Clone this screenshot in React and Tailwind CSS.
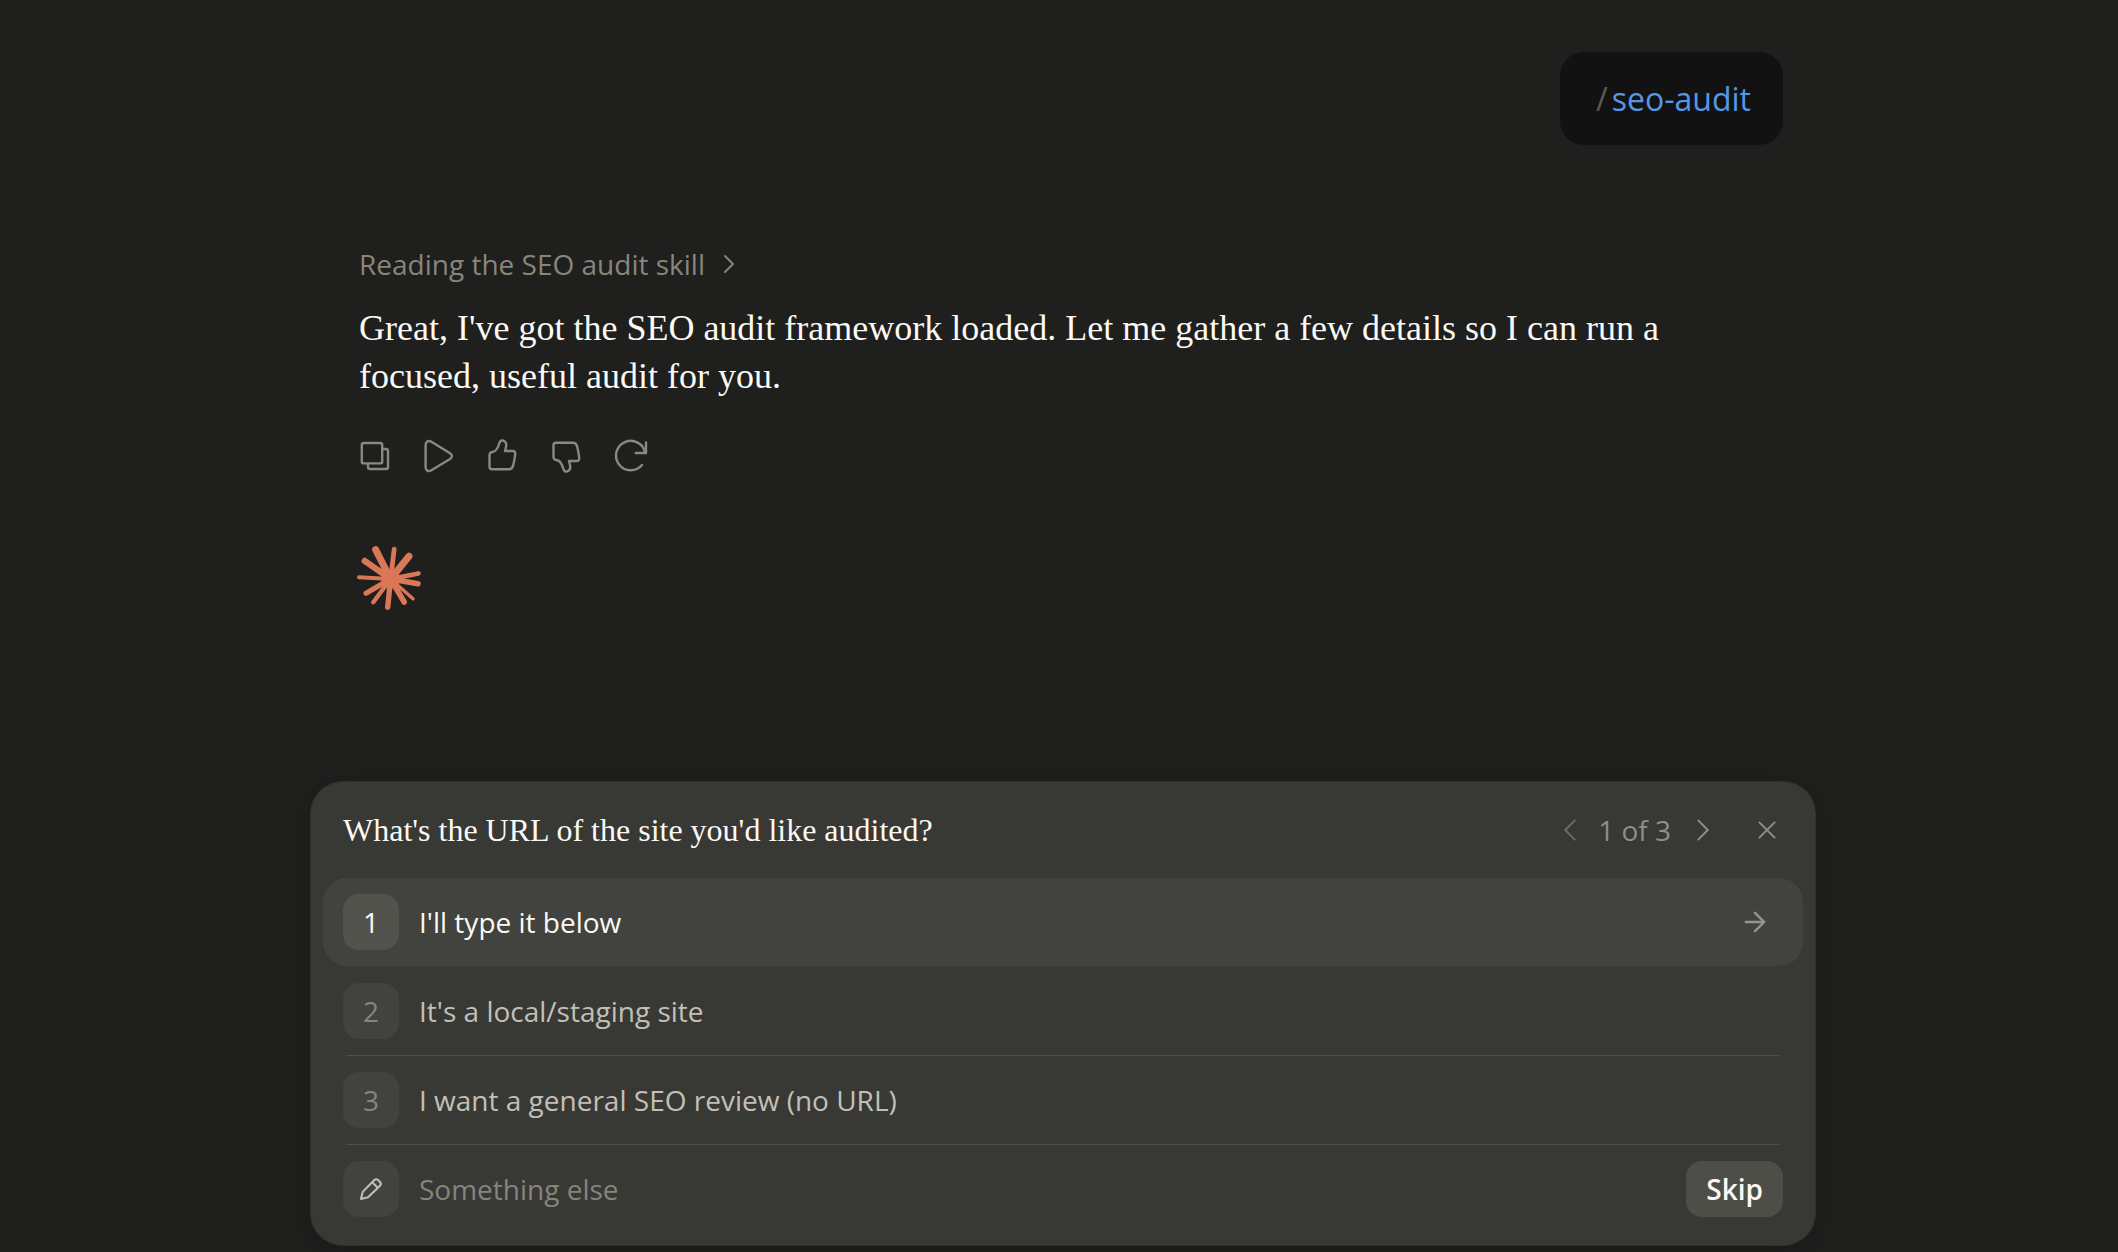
import React, { useState } from "react";

const options = [
  "I'll type it below",
  "It's a local/staging site",
  "I want a general SEO review (no URL)",
];

// tip x, tip y, thickness of each ray
const rays = [
  [18.6, 3.6, 7],
  [37.2, 3.2, 4.8],
  [52, 10.2, 7],
  [61.4, 27.4, 4.6],
  [61, 37.8, 5.6],
  [56, 52.8, 3.4],
  [47.2, 56, 5.6],
  [30.7, 61.2, 5.4],
  [16.3, 56.2, 4.4],
  [9, 47.2, 5.2],
  [2, 31.3, 4],
  [7.8, 15, 6.4],
];

function Icon({ children, className = "size-10", strokeWidth = 2.4 }) {
  return (
    <svg
      viewBox="0 0 40 40"
      fill="none"
      stroke="currentColor"
      strokeWidth={strokeWidth}
      strokeLinecap="round"
      strokeLinejoin="round"
      className={className}
      aria-hidden="true"
    >
      {children}
    </svg>
  );
}

const thumbPath =
  "M6.5 19a3 3 0 0 1 3-3C13 15.6 15.4 10.6 16.4 7C17.3 3.8 20 4.2 21.5 5.2C23.6 6.6 23.6 8.5 23 11L22 15H29.5C31.5 15 32.5 16.2 32.2 18.2C31.8 22 31.2 26 30 30C29.2 32.4 28.2 33.2 26 33.2H9C7.5 33.2 6.5 32.2 6.5 30.7Z";

function ActionButton({ label, children }) {
  return (
    <button
      type="button"
      aria-label={label}
      className="size-16 flex items-center justify-center rounded-2xl cursor-pointer"
    >
      {children}
    </button>
  );
}

function MessageActions() {
  return (
    <div className="flex -ml-4 mt-6 text-[#8a8981]">
      <ActionButton label="Copy">
        <Icon>
          <rect x="6.8" y="7" width="20.4" height="20.4" rx="2" />
          <path d="M28 13h3a2 2 0 0 1 2 2v16a2 2 0 0 1-2 2H15a2 2 0 0 1-2-2v-3" />
        </Icon>
      </ActionButton>
      <ActionButton label="Read aloud">
        <Icon>
          <path d="M6.6 9.2C6.6 5.4 9.4 4 12.4 5.8L31 17.2C33.6 18.8 33.6 21.4 31 23L12.4 34.3C9.4 36.1 6.6 34.6 6.6 30.9Z" />
        </Icon>
      </ActionButton>
      <ActionButton label="Good response">
        <Icon>
          <path d={thumbPath} />
        </Icon>
      </ActionButton>
      <ActionButton label="Bad response">
        <Icon className="size-10 -scale-y-100">
          <path d={thumbPath} />
        </Icon>
      </ActionButton>
      <ActionButton label="Retry">
        <Icon>
          <path d="M35 6.5V17H24.8" />
          <path d="M34.2 17A14.7 14.7 0 1 0 31 29" />
        </Icon>
      </ActionButton>
    </div>
  );
}

function Starburst() {
  return (
    <svg
      viewBox="0 0 64 64"
      className="size-16 -ml-0.5 mt-[58px]"
      aria-hidden="true"
    >
      <circle cx="33.6" cy="33" r="9.5" fill="#d97757" />
      {rays.map(([x, y, w]) => (
        <line
          key={`${x}-${y}`}
          x1="33.6"
          y1="33"
          x2={x}
          y2={y}
          stroke="#d97757"
          strokeWidth={w}
          strokeLinecap="round"
        />
      ))}
    </svg>
  );
}

function QuestionCard() {
  const [selected, setSelected] = useState(0);
  const [other, setOther] = useState("");

  return (
    <section className="bg-[#383835] rounded-[32px] px-3 pb-3 ring-1 ring-[#30302e] shadow-[0_6px_32px_rgba(0,0,0,0.22)]">
      {/* Header */}
      <div className="h-24 px-5 flex items-center justify-between">
        <h2 className="font-['Liberation_Serif',serif] text-[32px] leading-10 text-[#faf9f5]">
          What's the URL of the site you'd like audited?
        </h2>

        <div className="flex items-center text-[#8f8e87]">
          <button
            type="button"
            aria-label="Previous question"
            disabled
            className="size-8 flex items-center justify-center text-[#6b6a65]"
          >
            <Icon className="size-8">
              <path d="M26 8L14 20L26 32" />
            </Icon>
          </button>
          <span className="ml-3 mr-4 text-[28px] leading-10">1 of 3</span>
          <button
            type="button"
            aria-label="Next question"
            className="size-8 flex items-center justify-center cursor-pointer"
          >
            <Icon className="size-8">
              <path d="M14 8L26 20L14 32" />
            </Icon>
          </button>
          <button
            type="button"
            aria-label="Close"
            className="size-8 ml-8 flex items-center justify-center cursor-pointer"
          >
            <Icon className="size-8">
              <path d="M10.5 10.5L29.5 29.5M29.5 10.5L10.5 29.5" />
            </Icon>
          </button>
        </div>
      </div>

      {/* Options */}
      {options.map((text, i) => {
        const active = i === selected;

        return (
          <div key={text}>
            <button
              type="button"
              onClick={() => setSelected(i)}
              className={
                active
                  ? "w-full px-5 py-4 flex items-center gap-5 rounded-3xl text-left cursor-pointer bg-[#42423e] text-[#faf9f5]"
                  : "w-full px-5 py-4 flex items-center gap-5 rounded-3xl text-left cursor-pointer text-[#c2c0b6]"
              }
            >
              <span
                className={
                  active
                    ? "size-14 flex items-center justify-center rounded-2xl text-[28px] leading-10 bg-[#53534e]"
                    : "size-14 flex items-center justify-center rounded-2xl text-[28px] leading-10 bg-[#42423e] text-[#85847d]"
                }
              >
                {i + 1}
              </span>
              <span className="flex-1 text-[28px] leading-10">{text}</span>
              {active && (
                <span className="size-14 flex items-center justify-center text-[#96958d]">
                  <Icon className="size-8" strokeWidth={3}>
                    <path d="M8.5 20H31.5M20 8.5L31.5 20L20 31.5" />
                  </Icon>
                </span>
              )}
            </button>
            <div
              className={active ? "h-px mx-6" : "h-px mx-6 bg-[#51514c]"}
            />
          </div>
        );
      })}

      {/* Free text */}
      <div className="px-5 py-4 flex items-center gap-5">
        <label
          htmlFor="other"
          className="size-14 flex items-center justify-center rounded-2xl bg-[#42423e] text-[#c2c0b6]"
        >
          <Icon className="size-8" strokeWidth={2.6}>
            <path d="M7.5 32.5L9.6 23.6L24.2 8.8C25.6 7.4 27.4 7.4 28.8 8.8L31.2 11.2C32.6 12.6 32.6 14.4 31.2 15.8L16.4 30.4ZM21.6 11.6L28.4 18.4" />
          </Icon>
        </label>
        <input
          id="other"
          type="text"
          value={other}
          onChange={(e) => setOther(e.target.value)}
          placeholder="Something else"
          className="flex-1 min-w-0 bg-transparent text-[28px] leading-10 text-[#faf9f5] placeholder:text-[#85847d] focus:outline-none"
        />
        <button
          type="button"
          className="h-14 px-5 rounded-2xl bg-[#4e4e49] text-[28px] leading-10 font-semibold text-[#faf9f5] cursor-pointer"
        >
          Skip
        </button>
      </div>
    </section>
  );
}

export default function App() {
  return (
    <div className="min-h-screen bg-[#1f1f1e] pl-2 pb-[7px] flex flex-col font-['Open_Sans',sans-serif]">
      <main className="w-full max-w-[1504px] mx-auto flex-1 flex flex-col">
        <div className="pt-13 pl-12 pr-8 flex-1">
          {/* User message */}
          <div className="flex justify-end">
            <div className="bg-[#121212] rounded-3xl pl-9 pr-8 py-6 flex gap-1 text-[32px] leading-[45px]">
              <span className="text-[#5a5953]">/</span>
              <span className="text-[#5597e3]">seo-audit</span>
            </div>
          </div>

          {/* Assistant message */}
          <button
            type="button"
            className="mt-[99px] flex items-center gap-2 text-[28px] leading-10 text-[#87867d] cursor-pointer"
          >
            Reading the SEO audit skill
            <Icon className="size-8">
              <path d="M15 10L25 20L15 30" />
            </Icon>
          </button>

          <p className="mt-5 max-w-[1360px] font-['Liberation_Serif',serif] text-[36px] leading-12 text-[#faf9f5]">
            Great, I've got the SEO audit framework loaded. Let me gather a few
            details so I can run a focused, useful audit for you.
          </p>

          <MessageActions />
          <Starburst />
        </div>

        <QuestionCard />
      </main>
    </div>
  );
}
